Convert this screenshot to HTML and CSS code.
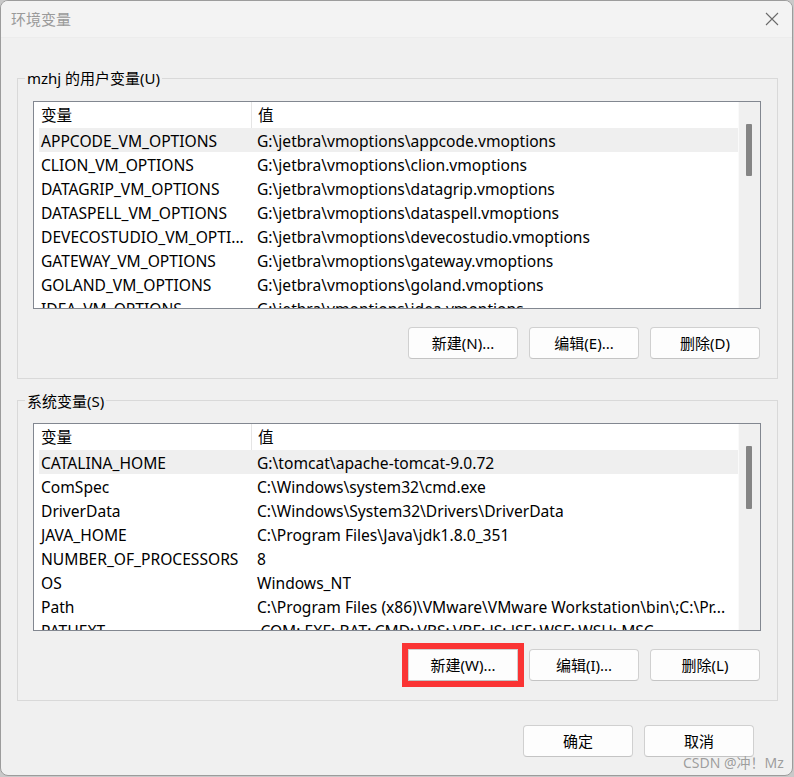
FILE: index.html
```html
<!DOCTYPE html>
<html lang="zh-CN">
<head>
<meta charset="utf-8">
<title>环境变量</title>
<link rel="stylesheet" href="styles.css">
</head>
<body>
<div class="dialog">
  <div class="titlebar">
    <span class="title">环境变量</span>
    <svg class="close" width="14" height="14" viewBox="0 0 14 14"><path d="M1 1L13 13M13 1L1 13" stroke="#6a6a6a" stroke-width="1.1" fill="none"/></svg>
  </div>
  <div class="content">
    <fieldset class="group">
      <legend>mzhj 的用户变量(U)</legend>
      <div class="list">
        <div class="table">
          <div class="row head"><span class="c1">变量</span><span class="c2">值</span></div>
          <div class="row sel"><span class="c1">APPCODE_VM_OPTIONS</span><span class="c2">G:\jetbra\vmoptions\appcode.vmoptions</span></div>
          <div class="row"><span class="c1">CLION_VM_OPTIONS</span><span class="c2">G:\jetbra\vmoptions\clion.vmoptions</span></div>
          <div class="row"><span class="c1">DATAGRIP_VM_OPTIONS</span><span class="c2">G:\jetbra\vmoptions\datagrip.vmoptions</span></div>
          <div class="row"><span class="c1">DATASPELL_VM_OPTIONS</span><span class="c2">G:\jetbra\vmoptions\dataspell.vmoptions</span></div>
          <div class="row"><span class="c1">DEVECOSTUDIO_VM_OPTI...</span><span class="c2">G:\jetbra\vmoptions\devecostudio.vmoptions</span></div>
          <div class="row"><span class="c1">GATEWAY_VM_OPTIONS</span><span class="c2">G:\jetbra\vmoptions\gateway.vmoptions</span></div>
          <div class="row"><span class="c1">GOLAND_VM_OPTIONS</span><span class="c2">G:\jetbra\vmoptions\goland.vmoptions</span></div>
          <div class="row"><span class="c1">IDEA_VM_OPTIONS</span><span class="c2">G:\jetbra\vmoptions\idea.vmoptions</span></div>
        </div>
        <div class="scroll"><div class="thumb t1"></div></div>
      </div>
      <div class="buttons">
        <button class="btn">新建(N)...</button>
        <button class="btn">编辑(E)...</button>
        <button class="btn">删除(D)</button>
      </div>
    </fieldset>

    <fieldset class="group g2">
      <legend>系统变量(S)</legend>
      <div class="list">
        <div class="table">
          <div class="row head"><span class="c1">变量</span><span class="c2">值</span></div>
          <div class="row sel"><span class="c1">CATALINA_HOME</span><span class="c2">G:\tomcat\apache-tomcat-9.0.72</span></div>
          <div class="row"><span class="c1">ComSpec</span><span class="c2">C:\Windows\system32\cmd.exe</span></div>
          <div class="row"><span class="c1">DriverData</span><span class="c2">C:\Windows\System32\Drivers\DriverData</span></div>
          <div class="row"><span class="c1">JAVA_HOME</span><span class="c2">C:\Program Files\Java\jdk1.8.0_351</span></div>
          <div class="row"><span class="c1">NUMBER_OF_PROCESSORS</span><span class="c2">8</span></div>
          <div class="row"><span class="c1">OS</span><span class="c2">Windows_NT</span></div>
          <div class="row"><span class="c1">Path</span><span class="c2">C:\Program Files (x86)\VMware\VMware Workstation\bin\;C:\Pr...</span></div>
          <div class="row"><span class="c1">PATHEXT</span><span class="c2">.COM;.EXE;.BAT;.CMD;.VBS;.VBE;.JS;.JSE;.WSF;.WSH;.MSC</span></div>
        </div>
        <div class="scroll"><div class="thumb t2"></div></div>
      </div>
      <div class="buttons">
        <button class="btn marked">新建(W)...</button>
        <button class="btn">编辑(I)...</button>
        <button class="btn">删除(L)</button>
      </div>
    </fieldset>

    <div class="footer">
      <button class="btn">确定</button>
      <button class="btn">取消</button>
    </div>
  </div>
  <div class="watermark">CSDN @冲！Mz</div>
</div>
</body>
</html>
```

FILE: styles.css
```css
* { box-sizing: border-box; }
html, body { margin: 0; padding: 0; }
body {
  background: #c9c9c9;
  width: 794px;
  height: 777px;
  overflow: hidden;
  font-family: "Noto Sans", "Noto Sans CJK SC", sans-serif;
  font-size: 15px;
  color: #000;
}
.dialog {
  position: relative;
  width: 793px;
  height: 776px;
  background: #f0f0f0;
  border: 1px solid #9c9c9c;
  border-radius: 8px;
  overflow: hidden;
}
.titlebar {
  height: 37px;
  display: flex;
  align-items: center;
  justify-content: space-between;
  padding: 0 13px 0 10px;
  background: #f3f3f3;
  border-bottom: 1px solid #ececec;
}
.title {
  color: #9a9a9a;
  font-size: 15px;
  font-family: "Noto Sans CJK SC", sans-serif;
  line-height: 20px;
}
.close { display: block; }
.content {
  padding: 30px 14px 0 16px;
}
.group {
  margin: 0;
  border: 1px solid #d9d9d9;
  padding: 13px 16px 19px 15px;
  min-width: 0;
}
.g2 { margin-top: 11px; padding-top: 13px; }
.group legend {
  padding: 0 2px;
  margin-left: -8px;
  line-height: 20px;
  font-size: 15px;
}
.g2 legend { position: relative; top: 1px; }
.list {
  height: 208px;
  border: 1px solid #828790;
  background: #fff;
  display: flex;
}
.table {
  flex: 1;
  overflow: hidden;
  min-width: 0;
  font-size: 15.6px;
}
.row {
  display: flex;
  height: 24px;
  line-height: 26px;
  margin-left: 5px;
  white-space: nowrap;
}
.row.head {
  height: 26px;
  line-height: 27px;
  margin-left: 0;
  padding-left: 5px;
}
.row.sel { background: #efefef; }
.c1 {
  width: 212px;
  flex: none;
  padding-left: 2px;
  overflow: hidden;
}
.head .c1 { border-right: 1px solid #e5e5e5; width: 213px; }
.c2 {
  padding-left: 6px;
  overflow: hidden;
}
.scroll {
  width: 22px;
  flex: none;
  background: #f0f0f0;
  border-left: 1px solid #fafafa;
  position: relative;
}
.thumb {
  position: absolute;
  left: 7px;
  width: 6px;
  background: #858585;
  border-radius: 1px;
}
.t1 { top: 22px; height: 52px; }
.t2 { top: 22px; height: 63px; }
.buttons {
  display: flex;
  justify-content: flex-end;
  gap: 11px;
  margin-top: 18px;
  padding-right: 1px;
}
.btn {
  width: 110px;
  height: 32px;
  background: #fdfdfd;
  border: 1px solid #d0d0d0;
  border-bottom-color: #c4c4c4;
  border-radius: 4px;
  font-family: "Noto Sans", "Noto Sans CJK SC", sans-serif;
  font-size: 15px;
  color: #000;
  padding: 0;
  line-height: 30px;
}
.btn.marked {
  outline: 6px solid #fa3434;
  outline-offset: 0;
  border-radius: 0;
}
.footer {
  display: flex;
  justify-content: flex-end;
  gap: 11px;
  margin-top: 24px;
  padding-right: 24px;
}
.watermark {
  position: absolute;
  left: 682px;
  top: 751px;
  font-size: 14px;
  color: rgba(110, 110, 110, 0.65);
  font-family: "Noto Sans", "Noto Sans CJK SC", sans-serif;
  white-space: nowrap;
}
```
